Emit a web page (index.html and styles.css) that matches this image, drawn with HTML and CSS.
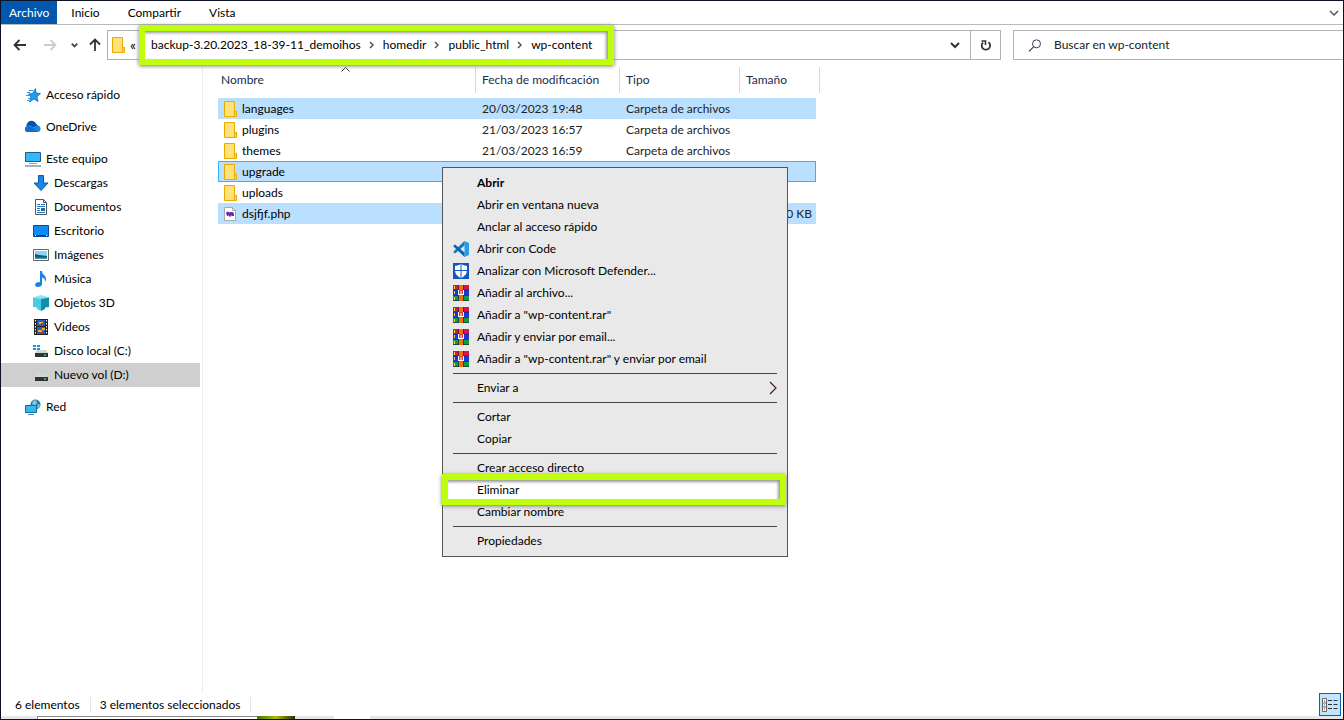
FILE: index.html
```html
<!DOCTYPE html>
<html lang="es">
<head>
<meta charset="utf-8">
<title>wp-content</title>
<link rel="stylesheet" href="styles.css">
</head>
<body>
<svg class="defs" aria-hidden="true">
  <symbol id="folder" viewBox="0 0 14 16"><path d="M1.500.5h10v15h-10z" fill="#ffe07a" stroke="#e8ac00"/><path d="M11.500 15.500v-4l2-1.500v5.500z" fill="#ffd95f" stroke="#e8ac00"/></symbol>
  <symbol id="rar" viewBox="0 0 16 16"><path fill="#e0123f" d="M0 0h16v5H0z"/><path fill="#2133e0" d="M0 5h16v5H0z"/><path fill="#0b9e3c" d="M0 10h16v6H0z"/><path stroke="#1a1a40" stroke-opacity=".6" d="M0 5h16M0 10.500h16M5.500 0v16M10.500 0v16M0 15.500h16"/><path fill="#f0700f" d="M6 0h4v16H6z"/><path fill="#e03a2c" d="M5 5h6v5H5z"/><path d="M5.500 5v4M8 6v4M10.500 5v4M5 9.500h6" stroke="#fff"/><path d="M1.500 1v3M1.500 6v3M1.500 12v3" stroke="#f4d22d"/></symbol>
  <symbol id="sep" viewBox="0 0 6 8"><path d="M1 1l3 3-3 3" fill="none" stroke="#555" stroke-width="1.500"/></symbol>
  <symbol id="down" viewBox="0 0 10 8"><path d="M1 2l4 4 4-4" fill="none" stroke="currentColor" stroke-width="2"/></symbol>
  <symbol id="drive" viewBox="0 0 16 16"><path d="M4 7h9l2 3H2z" fill="#d5d5d5"/><path d="M2 10h13v4H2z" fill="#333"/><path d="M11 12h2" stroke="#28e33b" stroke-width="1.500"/></symbol>
</svg>
<div class="window">
  <nav class="ribbon" aria-label="Cinta">
    <button class="tab tab-file">Archivo</button>
    <button class="tab">Inicio</button>
    <button class="tab">Compartir</button>
    <button class="tab">Vista</button>
    <button class="expand" aria-label="Expandir la cinta"><svg width="10" height="8" viewBox="0 0 10 8"><path d="M1 2l4 4 4-4" fill="none" stroke="#555" stroke-width="1.500"/></svg></button>
  </nav>
  <div class="toolbar">
    <div class="history">
      <button class="tool" aria-label="Atrás"><svg width="14" height="12" viewBox="0 0 14 12"><path d="M6.500 1L1.500 6l5 5M2 6h11" fill="none" stroke="#333" stroke-width="1.800"/></svg></button>
      <button class="tool" aria-label="Adelante"><svg width="14" height="12" viewBox="0 0 14 12"><path d="M7.500 1l5 5-5 5M12 6H1" fill="none" stroke="#ccc" stroke-width="1.800"/></svg></button>
      <button class="tool tool-small" aria-label="Recientes"><svg width="7" height="6" viewBox="0 0 10 8"><path d="M1 2l4 4 4-4" fill="none" stroke="#444" stroke-width="2.500"/></svg></button>
      <button class="tool tool-up" aria-label="Subir"><svg width="12" height="14" viewBox="0 0 12 14"><path d="M1 6.500l5-5 5 5M6 2v11" fill="none" stroke="#333" stroke-width="1.800"/></svg></button>
    </div>
    <div class="address">
      <svg class="folder" width="14" height="16"><use href="#folder"/></svg>
      <span class="more">«</span>
      <div class="crumbs">
        <button class="crumb">backup-3.20.2023_18-39-11_demoihos</button>
        <svg width="6" height="8"><use href="#sep"/></svg>
        <button class="crumb">homedir</button>
        <svg width="6" height="8"><use href="#sep"/></svg>
        <button class="crumb">public_html</button>
        <svg width="6" height="8"><use href="#sep"/></svg>
        <button class="crumb">wp-content</button>
      </div>
      <button class="addr-btn" aria-label="Ubicaciones anteriores"><svg width="10" height="8"><use href="#down"/></svg></button>
      <button class="addr-btn refresh" aria-label="Actualizar"><svg width="12" height="13" viewBox="0 0 12 13"><path d="M3 3.500A4.200 4.200 0 1 0 8.500 3.200" fill="none" stroke="#333" stroke-width="1.800"/><path d="M1.500 2h4v4" fill="none" stroke="#333" stroke-width="1.600"/></svg></button>
    </div>
    <label class="search">
      <svg width="14" height="13" viewBox="0 0 14 13"><circle cx="8.500" cy="4.800" r="4" fill="none" stroke="#43395c"/><path d="M5.500 7.800L1 12.300" stroke="#43395c" stroke-width="1.200"/></svg>
      <input type="text" placeholder="Buscar en wp-content" aria-label="Buscar en wp-content">
    </label>
  </div>
  <div class="main">
    <nav class="sidebar" aria-label="Panel de navegación">
      <a class="node" href="#"><svg width="16" height="16" viewBox="0 0 16 16"><path d="M10.500 1.500l.5 4.500 4.500.5-3.500 3 1 5-4-2.500-4.500 3 1.500-5L3.500 7l4-.5z" fill="#219bea" stroke="#0b6fc2" stroke-width=".8"/><path d="M4 3.500h4M2 5.500h3M1 8.500h4M3 11.500h2M2 13.500h2" stroke="#2d9ae5"/></svg>Acceso rápido</a>
      <a class="node" href="#"><svg width="16" height="16" viewBox="0 0 16 16"><path d="M2 9a5 5 0 0 1 9-4.500l2.500 3L8 12H3z" fill="#0a4fae"/><path d="M3 13a3 3 0 0 1-.5-6c2-1 4 0 5.500 1l4-1.500A3.300 3.300 0 0 1 13 13z" fill="#1787e0"/><path d="M0 11c0-3 3-4.500 6-3l7.500 5H3a3 3 0 0 1-3-2z" fill="#126bd0"/></svg>OneDrive</a>
      <div class="group">
        <a class="node" href="#"><svg width="16" height="16" viewBox="0 0 16 16"><path d="M.5 1.500h15v9H.5z" fill="#35b7f7" stroke="#1d5c88"/><path d="M4 12.500h8" stroke="#8ea7b8"/><path d="M0 15h16" stroke="#2c7196"/></svg>Este equipo</a>
        <a class="node child" href="#"><svg width="16" height="16" viewBox="0 0 16 16"><path d="M5.500.5h5V8h4.500l-7 7.500L1 8h4.500z" fill="#1686e8" stroke="#0a5ba7"/></svg>Descargas</a>
        <a class="node child" href="#"><svg width="16" height="16" viewBox="0 0 16 16"><path d="M2.500.5h8l3 3v12h-11z" fill="#fff" stroke="#555"/><path d="M10.500.5v3h3" fill="none" stroke="#555"/><path d="M4 5.500h3M8 5.500h4M4 7.500h8M4 9.500h3M4 11.500h3M4 13.500h8" stroke="#2376c9"/><path d="M8 9h4v3H8z" fill="#286b8d"/></svg>Documentos</a>
        <a class="node child" href="#"><svg width="16" height="16" viewBox="0 0 16 16"><path d="M.5 2.500h15v11H.5z" fill="#0b8cf3" stroke="#0a4c8c"/><path d="M1 12.500h12" stroke="#0a3866"/><path d="M2 12.500h1M13 12.500h1" stroke="#fff"/></svg>Escritorio</a>
        <a class="node child" href="#"><svg width="16" height="16" viewBox="0 0 16 16"><path d="M.5 2.500h15v11H.5z" fill="#fff" stroke="#666"/><path d="M2 4h12v8H2z" fill="#8fd2f4"/><path d="M2 7l4 1 8 1v3H2z" fill="#14566a"/><path d="M2 10.500h12V12H2z" fill="#3a95ba"/></svg>Imágenes</a>
        <a class="node child" href="#"><svg width="16" height="16" viewBox="0 0 16 16"><path d="M7 0h2c0 4 4 4 4 8 0 1-.5 2-1 3 0-3-1-4-3-4.500V13c0 2-2 3-4 3s-3-1-3-2.500S4 11 7 11z" fill="#1683e8"/></svg>Música</a>
        <a class="node child" href="#"><svg width="16" height="16" viewBox="0 0 16 16"><path d="M0 2.500L8 0l8 2.500L8 5z" fill="#8de4f3"/><path d="M0 2.500L8 4v12l-4-2v-1.500L0 12z" fill="#4bcbe0"/><path d="M16 2.500L8 4v12l4-2v-1.500l4-.5z" fill="#128eab"/></svg>Objetos 3D</a>
        <a class="node child" href="#"><svg width="16" height="16" viewBox="0 0 16 16"><path d="M1 0h14v16H1z" fill="#222"/><path d="M2.500 1v14M13.500 1v14" stroke="#fff" stroke-dasharray="1.500 1.500"/><path d="M4 1h8v6H4zM4 8h8v7H4z" fill="#2462bd"/><path d="M6 3h4v2H6zM5 11h4v2H5zM9 9h3v2H9z" fill="#eeb12b"/><path d="M8 4h3v2H8zM7 13h3v1H7z" fill="#a83e2b"/></svg>Videos</a>
        <a class="node child" href="#"><svg width="16" height="16" viewBox="0 0 16 16"><use href="#drive"/><path d="M0 2h3v2H0zM4 2h3v2H4zM0 5h3v2H0zM4 5h3v2H4z" fill="#1593e8"/></svg>Disco local (C:)</a>
        <a class="node child selected" href="#"><svg width="16" height="16"><use href="#drive"/></svg>Nuevo vol (D:)</a>
      </div>
      <a class="node" href="#"><svg width="16" height="16" viewBox="0 0 16 16"><circle cx="10.500" cy="5.500" r="5" fill="#287da8"/><path d="M8 2l3-1 1 3-2 3-3-2zM13 5l2 1-1 3-2-1z" fill="#80c8df"/><path d="M.5 6.500h11v7H.5z" fill="#36b9f1" stroke="#12699b"/><path d="M3 15.500h6" stroke="#4685a6"/></svg>Red</a>
    </nav>
    <section class="content">
      <table class="files">
        <colgroup><col><col class="c-date"><col class="c-type"><col class="c-size"></colgroup>
        <thead><tr>
          <th>Nombre<svg class="sort" width="9" height="5" viewBox="0 0 9 5"><path d="M.5 4.500l4-4 4 4" fill="none" stroke="#333"/></svg></th>
          <th>Fecha de modificación</th><th>Tipo</th><th>Tamaño</th>
        </tr></thead>
        <tbody>
          <tr class="on"><td><span class="name"><svg width="14" height="16"><use href="#folder"/></svg>languages</span></td><td>20/03/2023 19:48</td><td>Carpeta de archivos</td><td></td></tr>
          <tr><td><span class="name"><svg width="14" height="16"><use href="#folder"/></svg>plugins</span></td><td>21/03/2023 16:57</td><td>Carpeta de archivos</td><td></td></tr>
          <tr><td><span class="name"><svg width="14" height="16"><use href="#folder"/></svg>themes</span></td><td>21/03/2023 16:59</td><td>Carpeta de archivos</td><td></td></tr>
          <tr class="on focus"><td><span class="name"><svg width="14" height="16"><use href="#folder"/></svg>upgrade</span></td><td></td><td></td><td></td></tr>
          <tr><td><span class="name"><svg width="14" height="16"><use href="#folder"/></svg>uploads</span></td><td></td><td></td><td></td></tr>
          <tr class="on"><td><span class="name"><svg width="14" height="16" viewBox="0 0 14 16"><path d="M1.500 1.500h8l3 3v10h-11z" fill="#fff" stroke="#aaa"/><path d="M9.500 1.500v3h3" fill="none" stroke="#aaa"/><path d="M3 7c1-2 3-1 4-.5 1-1 4-.5 4 1.500v2H9V9L8 10.500H6V9L5 10H4z" fill="#6a2ca8"/></svg>dsjfjf.php</span></td><td></td><td></td><td class="num">0 KB</td></tr>
        </tbody>
      </table>
    </section>
  </div>
  <footer class="status">
    <span class="stat">6 elementos</span>
    <span class="stat">3 elementos seleccionados</span>
    <button class="view" aria-label="Detalles"><svg width="16" height="14" viewBox="0 0 16 14"><path d="M.5.5h4v13h-4zM.5 5h4M.5 9h4" fill="#fff" stroke="#666"/><path d="M2 3h1" stroke="#333"/><path d="M2 7h1" stroke="#0a6fd0"/><path d="M2 11h1" stroke="#a22"/><path d="M6 2.500h4M11.500 2.500h4M6 6.500h4M11.500 6.500h4M6 10.500h4M11.500 10.500h4" stroke="#333"/></svg></button>
  </footer>
  <div class="behind"><span class="behind-box"></span><span class="behind-leaf"></span><span class="behind-gap"></span></div>

  <div class="menu" role="menu">
    <button class="item bold" role="menuitem">Abrir</button>
    <button class="item" role="menuitem">Abrir en ventana nueva</button>
    <button class="item" role="menuitem">Anclar al acceso rápido</button>
    <button class="item" role="menuitem"><svg class="ico" width="16" height="16" viewBox="0 0 16 16"><path d="M11.500 0L16 2v12l-4.500 2z" fill="#269ee8"/><path d="M11.500 0v4.500L2 12.500.5 11.500v-1z" fill="#1479c4"/><path d="M11.500 16v-4.500L2 3.500.5 4.500v1z" fill="#0868ae"/></svg>Abrir con Code</button>
    <button class="item" role="menuitem"><svg class="ico" width="16" height="16" viewBox="0 0 16 16"><path d="M0 0h16v16H0z" fill="#1256c4"/><path d="M8 1c2 1.200 3.800 1.800 6 1.800V7c0 4-2.500 6.500-6 8-3.500-1.500-6-4-6-8V2.800C4.200 2.800 6 2.200 8 1z" fill="#fff"/><path d="M8 1v14M2 7.500h12" stroke="#1256c4"/></svg>Analizar con Microsoft Defender...</button>
    <button class="item" role="menuitem"><svg class="ico" width="16" height="16"><use href="#rar"/></svg>Añadir al archivo...</button>
    <button class="item" role="menuitem"><svg class="ico" width="16" height="16"><use href="#rar"/></svg>Añadir a "wp-content.rar"</button>
    <button class="item" role="menuitem"><svg class="ico" width="16" height="16"><use href="#rar"/></svg>Añadir y enviar por email...</button>
    <button class="item" role="menuitem"><svg class="ico" width="16" height="16"><use href="#rar"/></svg>Añadir a "wp-content.rar" y enviar por email</button>
    <hr class="rule">
    <button class="item" role="menuitem">Enviar a<svg class="arrow" width="8" height="14" viewBox="0 0 8 14"><path d="M1 1l6 6-6 6" fill="none" stroke="#4b1c30" stroke-width="1.200"/></svg></button>
    <hr class="rule">
    <button class="item" role="menuitem">Cortar</button>
    <button class="item" role="menuitem">Copiar</button>
    <hr class="rule">
    <button class="item" role="menuitem">Crear acceso directo</button>
    <button class="item marked" role="menuitem">Eliminar</button>
    <button class="item" role="menuitem">Cambiar nombre</button>
    <hr class="rule">
    <button class="item" role="menuitem">Propiedades</button>
  </div>
</div>
</body>
</html>
```
FILE: styles.css
```css
* { box-sizing: border-box; }
body { margin: 0; font: 12px/16px Lato, "Open Sans", sans-serif; color: #000; background: #fff; }
button { font: inherit; color: inherit; background: none; border: 0; padding: 0; text-align: left; white-space: nowrap; }
svg { flex: none; display: block; }
.defs { position: absolute; width: 0; height: 0; }
.window { position: relative; display: flex; flex-direction: column; height: 100vh; border: 1px solid #0b1226; overflow: hidden; }

.ribbon { display: flex; height: 24px; border-bottom: 1px solid #b9babc; }
.tab { padding: 0 14px; }
.tab-file { background: #0057ae; color: #fff; padding: 0 8px; }
.expand { margin-left: auto; padding: 0 4px; }

.toolbar { display: flex; height: 41px; padding-top: 5px; align-items: flex-start; }
.history { display: flex; flex: none; width: 106px; height: 30px; align-items: center; padding-left: 12px; gap: 16px; }
.tool-small { margin-left: -2px; }
.tool-up { margin-left: -5px; }
.address { display: flex; align-items: center; flex: 1; height: 30px; border: 1px solid #b0b2b5; padding-left: 3px; }
.more { width: 16px; padding-left: 5px; font-size: 14px; }
.crumbs { position: relative; z-index: 2; display: flex; align-items: center; gap: 8px; height: 40px; margin-left: -2px; padding: 0 16px 0 6px; border: 6px solid #c0ff0c; background: #fff; box-shadow: 0 1px 4px #777, inset -2px 2px 3px #999; }
.addr-btn { display: grid; place-items: center; width: 30px; height: 28px; color: #333; }
.crumbs + .addr-btn { margin-left: auto; }
.refresh { border-left: 1px solid #b0b2b5; }
.search { display: flex; align-items: center; gap: 12px; flex: none; width: 330px; height: 30px; margin-left: 12px; padding-left: 14px; border: 1px solid #b0b2b5; border-right: 0; }
.search input { flex: 1; min-width: 0; border: 0; padding: 0; font: inherit; background: none; outline: 0; }
.search input::placeholder { color: #222; opacity: 1; }

.main { display: flex; flex: 1; min-height: 0; }
.sidebar { display: flex; flex-direction: column; gap: 8px; width: 202px; padding: 17px 2px 0 0; border-right: 1px solid #eee; }
.node { display: flex; align-items: center; gap: 5px; height: 24px; padding-left: 24px; color: #000; text-decoration: none; white-space: nowrap; }
.child { padding-left: 32px; }
.selected { background: #cfcfcf; }
.content { flex: 1; padding-left: 15px; }

.files { width: 598px; table-layout: fixed; border-collapse: separate; border-spacing: 0; }
.c-date { width: 144px; }
.c-type { width: 120px; }
.c-size { width: 76px; }
.files th { position: relative; height: 32px; padding: 0 0 4px 6px; font-weight: 400; text-align: left; color: #1b2b4d; white-space: nowrap; }
.files th:first-child { padding-left: 3px; }
.files th::after { content: ""; position: absolute; top: 1px; right: 0; width: 1px; height: 26px; background: #d8d8d8; }
.files th:last-child::after { right: -4px; }
.sort { position: absolute; top: 1px; left: 123px; }
.files td { height: 21px; padding: 0 4px 0 6px; color: #222; white-space: nowrap; }
.files td:first-child { padding-left: 5px; color: #000; }
.name { display: flex; align-items: center; gap: 5px; }
.on td { background: #bbdffe; }
.focus td { border: solid #3aaefa; border-width: 1px 0; }
.focus td:first-child { border-left-width: 1px; padding-left: 4px; }
.focus td:last-child { border-right-width: 1px; }
.files .num { text-align: right; }

.status { display: flex; align-items: center; height: 23px; padding-left: 14px; }
.stat { padding-right: 10px; margin-right: 9px; border-right: 1px solid #e6e6e6; }
.view { display: grid; place-items: center; width: 22px; height: 23px; margin-left: auto; margin-right: 2px; border: 1px solid #0a62b5; background: #bfe6fd; }
.behind { display: flex; height: 3px; background: #e6e7e9; }
.behind-box { width: 220px; margin-left: 36px; border: solid #888; border-width: 1px 0 0 1px; background: #fff; }
.behind-leaf { width: 38px; background: linear-gradient(90deg, #46760c, #a9b80c, #27300a); }
.behind-gap { width: 36px; margin-left: 39px; background: #fff; }

.menu { position: absolute; z-index: 3; left: 441px; top: 166px; width: 346px; padding: 4px 0; border: 1px solid #555; background: #e9e9e9; }
.item { position: relative; display: flex; align-items: center; width: 100%; height: 22px; padding-left: 34px; }
.bold { font-weight: 700; }
.ico { position: absolute; left: 10px; top: 3px; }
.arrow { margin-left: auto; margin-right: 10px; }
.rule { height: 1px; margin: 3px 10px; border: 0; background: #444; }
.marked { z-index: 1; }
.marked::before { content: ""; position: absolute; z-index: -1; left: -1px; right: 1px; top: -5px; bottom: -4px; border: 6px solid #c0ff0c; background: #fff; box-shadow: 0 1px 4px #777, inset -2px 2px 3px #999; }
```
